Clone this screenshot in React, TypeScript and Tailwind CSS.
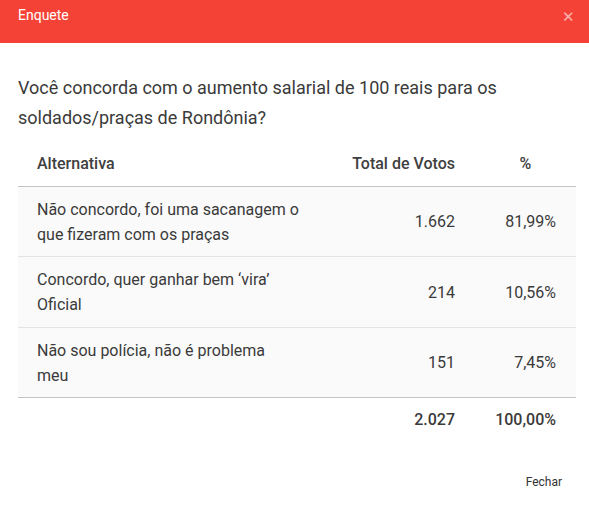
import React from 'react'

const rows = [
  { lines: ['Não concordo, foi uma sacanagem o', 'que fizeram com os praças'], votes: '1.662', pct: '81,99%', h: 'h-[70px]' },
  { lines: ['Concordo, quer ganhar bem ‘vira’', 'Oficial'], votes: '214', pct: '10,56%', h: 'h-[71px]' },
  { lines: ['Não sou polícia, não é problema', 'meu'], votes: '151', pct: '7,45%', h: 'h-[70px]' }
]

const App = (): JSX.Element => {
  return (
    <div className="w-[589px] h-[518px] bg-white text-[#3a3a3a] font-['Roboto',sans-serif] overflow-hidden">
      <div className="h-[43px] bg-[#f44336] flex justify-between pl-[18px] pr-[14px] pt-[6px]">
        <span className="text-[14px] leading-[18px] text-white">Enquete</span>
        <span className="text-[15px] leading-[18px] text-white/60 pt-[2px]">✕</span>
      </div>

      <div className="pl-[18px] pr-[13px] pt-[30px]">
        <p className="text-[18px] leading-[30px] w-[530px]">
          Você concorda com o aumento salarial de 100 reais para os soldados/praças de Rondônia?
        </p>

        <div className="mt-[8px] w-[558px]">
          <div className="flex items-center h-[46px] border-b border-[#c4c4c4] text-[16px] font-medium text-[#404040]">
            <div className="w-[317px] shrink-0 pl-[19px]">Alternativa</div>
            <div className="w-[140px] shrink-0 pr-[20px] text-right">Total de Votos</div>
            <div className="w-[101px] shrink-0 text-center">%</div>
          </div>

          {rows.map((row, i) => (
            <div
              key={row.votes}
              className={
                'flex items-center bg-[#fafafa] text-[16px] leading-[25px] ' +
                row.h +
                (i < rows.length - 1 ? ' border-b border-[#e4e4e4]' : ' border-b border-[#c4c4c4]')
              }
            >
              <div className="w-[317px] shrink-0 pl-[19px]">
                {row.lines.map((line) => (
                  <div key={line} className="whitespace-nowrap">
                    {line}
                  </div>
                ))}
              </div>
              <div className="w-[140px] shrink-0 pr-[20px] text-right">{row.votes}</div>
              <div className="w-[101px] shrink-0 pr-[20px] text-right">{row.pct}</div>
            </div>
          ))}

          <div className="flex items-center h-[44px] text-[16px] font-medium">
            <div className="w-[317px] shrink-0" />
            <div className="w-[140px] shrink-0 pr-[20px] text-right">2.027</div>
            <div className="w-[101px] shrink-0 pr-[20px] text-right">100,00%</div>
          </div>
        </div>

        <div className="flex justify-end pr-[14px] mt-[33px]">
          <button className="text-[12px] leading-[14px] text-[#333]">Fechar</button>
        </div>
      </div>
    </div>
  )
}

export default App
